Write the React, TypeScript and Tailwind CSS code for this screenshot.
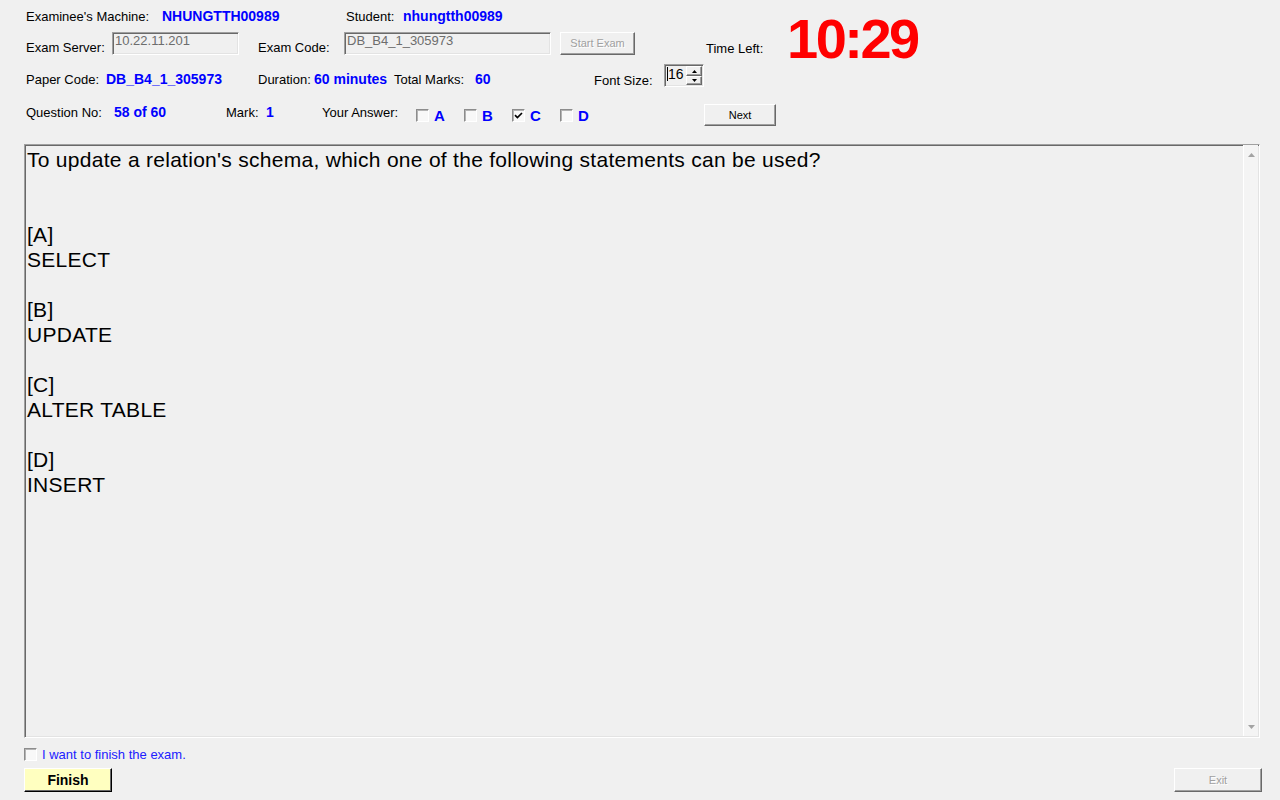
import React from "react";

const sunken =
  "border border-t-[#a0a0a0] border-l-[#a0a0a0] border-r-white border-b-white shadow-[inset_1px_1px_0_#696969,inset_-1px_-1px_0_#e3e3e3]";
const raised =
  "border border-t-white border-l-white border-r-[#696969] border-b-[#696969] shadow-[inset_-1px_-1px_0_#a0a0a0]";

const lines = [
  "To update a relation's schema, which one of the following statements can be used?",
  "",
  "",
  "[A]",
  "SELECT",
  "",
  "[B]",
  "UPDATE",
  "",
  "[C]",
  "ALTER TABLE",
  "",
  "[D]",
  "INSERT",
];

function CheckBox({ checked = false }: { checked?: boolean }) {
  return (
    <span className="flex h-[13px] w-[13px] shrink-0 items-center justify-center border border-t-[#8c8c8c] border-l-[#8c8c8c] border-r-white border-b-white bg-[#f8f8f8] shadow-[inset_1px_1px_0_#b4b4b4]">
      {checked && (
        <svg width="9" height="9" viewBox="0 0 9 9">
          <path d="M1 4.2 L3.4 6.6 L8 2" fill="none" stroke="#000" strokeWidth="1.7" />
        </svg>
      )}
    </span>
  );
}

function Answer({ letter, checked = false }: { letter: string; checked?: boolean }) {
  return (
    <div className="flex w-[48px] shrink-0 items-start">
      <div className="mt-[11px]">
        <CheckBox checked={checked} />
      </div>
      <span className="mt-[9px] ml-[5px] text-[15px] leading-[17px] font-bold text-[#0000ff]">
        {letter}
      </span>
    </div>
  );
}

function Arrow({ down = false }: { down?: boolean }) {
  return (
    <svg width="7" height="4" viewBox="0 0 7 4">
      <path d={down ? "M0 0 L7 0 L3.5 4 Z" : "M3.5 0 L7 4 L0 4 Z"} fill="#a3a3a3" />
    </svg>
  );
}

export default function App() {
  const label = "shrink-0 text-[13px] leading-[15px] text-black";
  const value = "shrink-0 text-[14px] leading-[16px] font-bold text-[#0000ff]";

  return (
    <div className="h-[800px] w-[1280px] overflow-hidden bg-[#f0f0f0] font-['Liberation_Sans',Arial,sans-serif] text-black">
      {/* Header: rows 1-2 with timer */}
      <div className="flex h-[58px] items-start">
        <div className="w-[783px] shrink-0">
          <div className="flex h-[32px] items-start pl-[26px]">
            <span className={`${label} mt-[9px] w-[136px]`}>Examinee's Machine:</span>
            <span className={`${value} mt-[8px] w-[184px]`}>NHUNGTTH00989</span>
            <span className={`${label} mt-[9px] w-[57px]`}>Student:</span>
            <span className={`${value} mt-[8px]`}>nhungtth00989</span>
          </div>
          <div className="flex h-[26px] items-start pl-[26px]">
            <span className={`${label} mt-[8px] w-[86px]`}>Exam Server:</span>
            <div className={`${sunken} h-[23px] w-[127px] shrink-0 pl-[2px] text-[13px] leading-[15px] text-[#6d6d6d]`}>
              10.22.11.201
            </div>
            <span className={`${label} mt-[8px] ml-[19px] w-[86px]`}>Exam Code:</span>
            <div className={`${sunken} h-[23px] w-[207px] shrink-0 pl-[2px] text-[13px] leading-[15px] text-[#6d6d6d]`}>
              DB_B4_1_305973
            </div>
            <button
              disabled
              className={`${raised} ml-[9px] flex h-[23px] w-[75px] shrink-0 items-center justify-center bg-[#f0f0f0] text-[11px] text-[#a0a0a0] [text-shadow:1px_1px_0_#fff]`}
            >
              Start Exam
            </button>
            <span className={`${label} mt-[9px] ml-[71px]`}>Time Left:</span>
          </div>
        </div>
        <div className="mt-[11px] ml-[4px] text-[56px] leading-[56px] font-bold tracking-[-2.5px] whitespace-nowrap text-[#ff0000]">
          10:29
        </div>
      </div>

      {/* Row 3 */}
      <div className="flex h-[40px] items-start pl-[26px]">
        <span className={`${label} mt-[14px] w-[80px]`}>Paper Code:</span>
        <span className={`${value} mt-[13px] w-[152px]`}>DB_B4_1_305973</span>
        <span className={`${label} mt-[14px] w-[56px]`}>Duration:</span>
        <span className={`${value} mt-[13px] w-[80px]`}>60 minutes</span>
        <span className={`${label} mt-[14px] w-[81px]`}>Total Marks:</span>
        <span className={`${value} mt-[13px] w-[119px]`}>60</span>
        <span className={`${label} mt-[15px] w-[70px]`}>Font Size:</span>
        <div className={`${sunken} mt-[6px] flex h-[23px] w-[40px] shrink-0 items-start bg-[#f0f0f0] pt-[1px] pl-[2px]`}>
          <span className="mt-[1px] h-[14px] w-[1px] shrink-0 bg-black" />
          <span className="text-[14px] leading-[17px]">16</span>
          <div className="mr-[1px] ml-auto flex h-[19px] w-[16px] flex-col">
            <div className={`${raised} flex h-[10px] items-center justify-center bg-[#f0f0f0]`}>
              <svg width="5" height="3" viewBox="0 0 5 3">
                <path d="M2.5 0 L5 3 L0 3 Z" fill="#000" />
              </svg>
            </div>
            <div className={`${raised} flex h-[9px] items-center justify-center bg-[#f0f0f0]`}>
              <svg width="5" height="3" viewBox="0 0 5 3">
                <path d="M0 0 L5 0 L2.5 3 Z" fill="#000" />
              </svg>
            </div>
          </div>
        </div>
      </div>

      {/* Row 4 */}
      <div className="flex h-[32px] items-start pl-[26px]">
        <span className={`${label} mt-[7px] w-[88px]`}>Question No:</span>
        <span className={`${value} mt-[6px] w-[112px]`}>58 of 60</span>
        <span className={`${label} mt-[7px] w-[40px]`}>Mark:</span>
        <span className={`${value} mt-[6px] w-[56px]`}>1</span>
        <span className={`${label} mt-[7px] w-[94px]`}>Your Answer:</span>
        <Answer letter="A" />
        <Answer letter="B" />
        <Answer letter="C" checked />
        <Answer letter="D" />
        <button
          className={`${raised} mt-[6px] ml-[96px] flex h-[22px] w-[72px] shrink-0 items-center justify-center bg-[#f0f0f0] text-[11px] text-black`}
        >
          Next
        </button>
      </div>

      {/* Question box */}
      <div className={`${sunken} mt-[14px] ml-[24px] flex h-[594px] w-[1236px] bg-[#f0f0f0]`}>
        <div className="flex-1 pt-[2px] pl-[2px] text-[21px] tracking-[0.28px] text-black">
          {lines.map((line, i) => (
            <div key={i} className="h-[25px] leading-[25px] whitespace-pre">
              {line}
            </div>
          ))}
        </div>
        <div className="mr-[1px] mb-[1px] flex w-[15px] flex-col justify-between border-l border-l-white bg-[#f4f4f4] pt-[8px] pb-[7px] pl-[4px]">
          <Arrow />
          <Arrow down />
        </div>
      </div>

      {/* Confirm */}
      <div className="mt-[10px] ml-[24px] flex h-[13px] items-center">
        <CheckBox />
        <span className="ml-[5px] text-[13px] leading-[15px] text-[#2020ff]">
          I want to finish the exam.
        </span>
      </div>

      <div className="mt-[7px] flex pr-[18px] pl-[24px]">
        <button className="flex h-[24px] w-[88px] items-center justify-center border border-t-white border-l-white border-r-black border-b-black bg-[#ffffc0] text-[14px] font-bold text-black shadow-[inset_-1px_-1px_0_#696969]">
          Finish
        </button>
        <button
          disabled
          className={`${raised} ml-auto flex h-[24px] w-[88px] items-center justify-center bg-[#f0f0f0] text-[11px] text-[#a0a0a0] [text-shadow:1px_1px_0_#fff]`}
        >
          Exit
        </button>
      </div>
    </div>
  );
}
